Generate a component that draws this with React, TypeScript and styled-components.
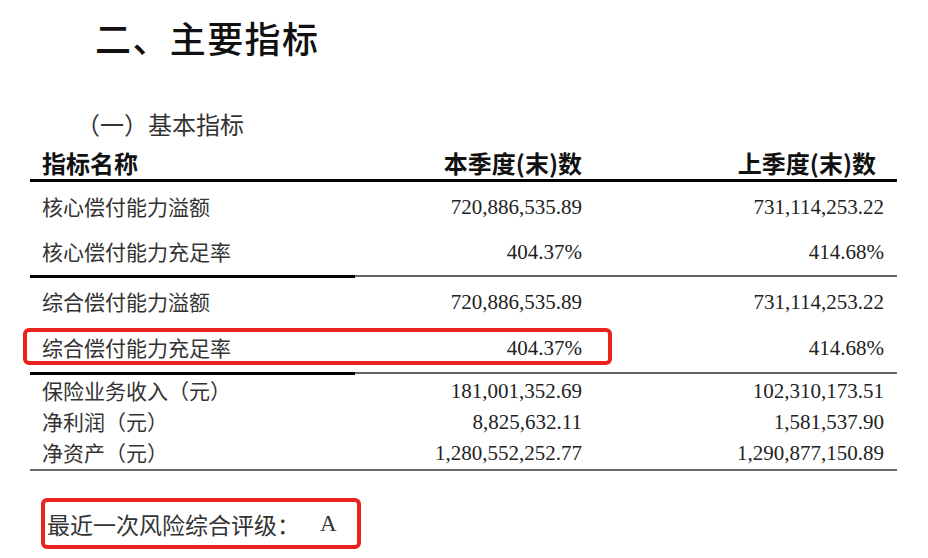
import React from 'react';
import styled, { createGlobalStyle } from 'styled-components';

const Global = createGlobalStyle`
  html, body { margin: 0; padding: 0; background: #fff; }
  body { font-family: "Noto Sans CJK SC", "Noto Sans", sans-serif; color: #222; }
`;

const Page = styled.div`
  width: 928px;
  height: 558px;
  overflow: hidden;
  box-sizing: border-box;
  padding-top: 15px;
  display: flex;
  flex-direction: column;
`;

const Title = styled.h1`
  margin: 0;
  padding-left: 95px;
  font-size: 36px;
  line-height: 44px;
  font-weight: 500;
  letter-spacing: 1.4px;
  color: #111;
`;

const SubTitle = styled.h2`
  margin: 49px 0 0;
  padding-left: 76px;
  font-size: 24px;
  line-height: 32px;
  font-weight: 400;
  color: #333;
`;

const Table = styled.div`
  margin-left: 30px;
  width: 867px;
  display: flex;
  flex-direction: column;
`;

const HeaderRow = styled.div`
  height: 39px;
  display: grid;
  grid-template-columns: 352px 200px 294px;
  align-items: end;
  border-bottom: 3px solid #000;
`;

const HeadCell = styled.div<{ $right?: boolean }>`
  font-size: 24px;
  line-height: 30px;
  padding-bottom: 1px;
  font-weight: 700;
  color: #111;
  padding-left: ${(p) => (p.$right ? '0' : '12px')};
  text-align: ${(p) => (p.$right ? 'right' : 'left')};
  white-space: nowrap;
`;

const Group = styled.div<{ $pt: number }>`
  padding-top: ${(p) => p.$pt}px;
  display: flex;
  flex-direction: column;
`;

const Row = styled.div<{ $h: number }>`
  position: relative;
  height: ${(p) => p.$h}px;
  display: grid;
  grid-template-columns: 352px 200px 302px;
  align-items: center;
`;

const Label = styled.div`
  padding: 0 0 4px 12px;
  font-size: 21px;
  line-height: 28px;
  color: #333;
  white-space: nowrap;
`;

const Value = styled.div`
  text-align: right;
  padding-bottom: 2px;
  font-family: "Liberation Serif", "Times New Roman", serif;
  font-size: 21px;
  line-height: 28px;
  color: #222;
  white-space: nowrap;
`;

const Highlight = styled.div`
  position: absolute;
  left: -7px;
  top: 2px;
  width: 589px;
  height: 37px;
  box-sizing: border-box;
  border: 4px solid #e8241c;
  border-radius: 6px;
  pointer-events: none;
`;

const Divider = styled.div`
  display: flex;
  align-items: flex-start;
  height: 3px;
`;

const ThickPart = styled.div`
  width: 325px;
  height: 3px;
  background: #000;
`;

const ThinPart = styled.div`
  flex: 1;
  height: 2px;
  background: #666;
`;

const BottomRule = styled.div`
  height: 2px;
  background: #6a6a6a;
`;

const RatingBox = styled.div`
  margin: 27px 0 0 41px;
  width: 320px;
  height: 51px;
  box-sizing: border-box;
  border: 4px solid #e8241c;
  border-radius: 6px;
  padding: 0 0 0 2px;
  display: flex;
  align-items: center;
  font-size: 23px;
  color: #333;
  white-space: nowrap;
`;

const Grade = styled.span`
  margin-left: 20px;
  font-family: "Liberation Serif", serif;
  font-size: 23px;
  color: #333;
`;

type RowData = { label: string; cur: string; prev: string; mark?: boolean };

const group1: RowData[] = [
  { label: '核心偿付能力溢额', cur: '720,886,535.89', prev: '731,114,253.22' },
  { label: '核心偿付能力充足率', cur: '404.37%', prev: '414.68%' },
];
const group2: RowData[] = [
  { label: '综合偿付能力溢额', cur: '720,886,535.89', prev: '731,114,253.22' },
  { label: '综合偿付能力充足率', cur: '404.37%', prev: '414.68%', mark: true },
];
const group3: RowData[] = [
  { label: '保险业务收入（元）', cur: '181,001,352.69', prev: '102,310,173.51' },
  { label: '净利润（元）', cur: '8,825,632.11', prev: '1,581,537.90' },
  { label: '净资产（元）', cur: '1,280,552,252.77', prev: '1,290,877,150.89' },
];

const renderRows = (rows: RowData[], h: number) =>
  rows.map((r) => (
    <Row key={r.label} $h={h}>
      <Label>{r.label}</Label>
      <Value>{r.cur}</Value>
      <Value>{r.prev}</Value>
      {r.mark && <Highlight />}
    </Row>
  ));

export default function App() {
  return (
    <>
      <Global />
      <Page>
        <Title>二、主要指标</Title>
        <SubTitle>（一）基本指标</SubTitle>
        <Table>
          <HeaderRow>
            <HeadCell>指标名称</HeadCell>
            <HeadCell $right>本季度(末)数</HeadCell>
            <HeadCell $right>上季度(末)数</HeadCell>
          </HeaderRow>
          <Group $pt={3}>{renderRows(group1, 45)}</Group>
          <Divider>
            <ThickPart />
            <ThinPart />
          </Divider>
          <Group $pt={2}>{renderRows(group2, 46)}</Group>
          <Divider>
            <ThickPart />
            <ThinPart />
          </Divider>
          <Group $pt={1}>{renderRows(group3, 31)}</Group>
          <BottomRule />
        </Table>
        <RatingBox>
          最近一次风险综合评级：<Grade>A</Grade>
        </RatingBox>
      </Page>
    </>
  );
}
